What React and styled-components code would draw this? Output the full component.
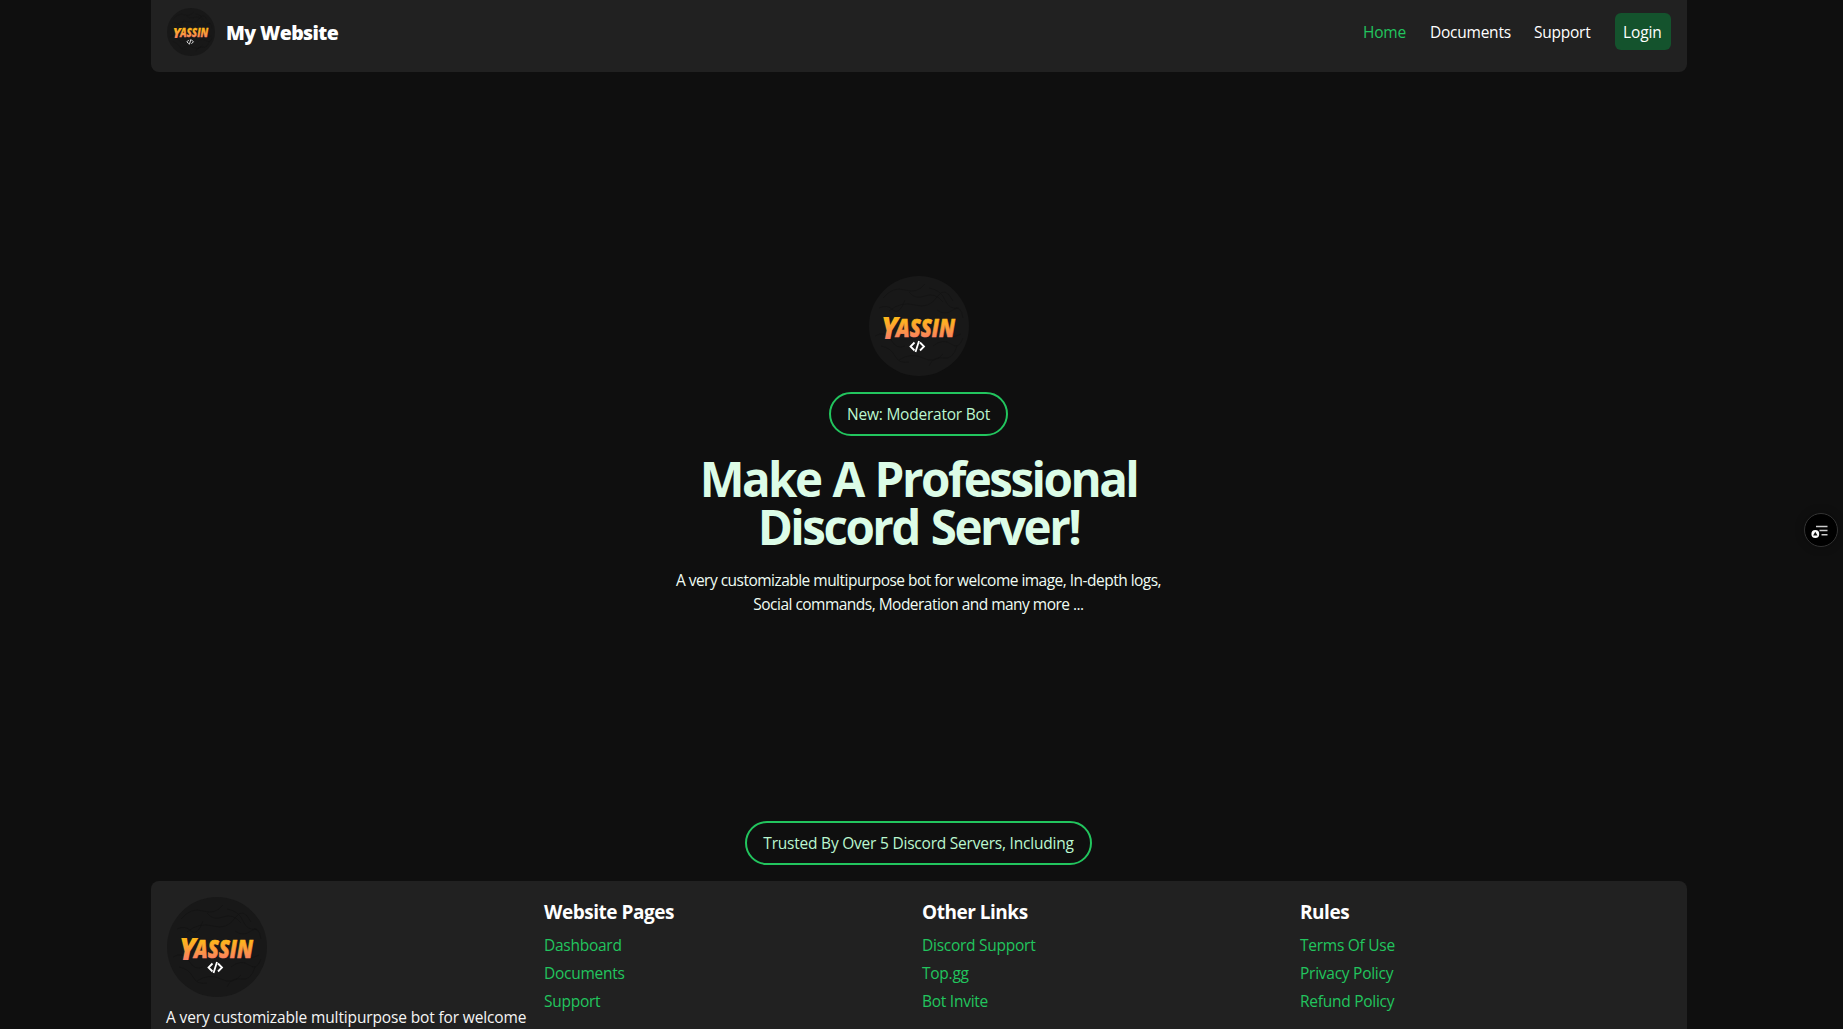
import React from "react";
import styled, { createGlobalStyle } from "styled-components";

const Global = createGlobalStyle`
  *, *::before, *::after { box-sizing: border-box; }
  html, body { margin: 0; height: 100%; }
  body {
    overflow: hidden;
    background: #0f0f0f;
    color: #fff;
    font-family: "Open Sans", "Noto Sans", sans-serif;
    font-size: 16px;
    line-height: 24px;
  }
  h1, h2, p, ul { margin: 0; padding: 0; }
  ul { list-style: none; }
  a { color: inherit; text-decoration: none; white-space: nowrap; }
`;

const Page = styled.div`
  height: 1029px;
  width: 100%;
  padding-right: 5px;
  overflow: hidden;
  display: flex;
  flex-direction: column;
  align-items: center;
`;

const Header = styled.header`
  width: 1536px;
  height: 72px;
  flex: none;
  padding: 8px 16px 16px;
  display: flex;
  justify-content: space-between;
  align-items: flex-start;
  background: #212121;
  border-radius: 0 0 8px 8px;
`;

const Brand = styled.a`
  display: flex;
  align-items: center;
  gap: 11px;
`;

const BrandName = styled.span`
  padding-top: 2px;
  font-size: 19.5px;
  line-height: 28px;
  font-weight: 800;
  letter-spacing: -0.6px;
`;

const Nav = styled.nav`
  display: flex;
  align-items: center;
  gap: 24px;
  padding-top: 5px;
`;

const NavLink = styled.a`
  font-size: 15.5px;
  line-height: 24px;
  width: ${(p) => p.$w}px;
  letter-spacing: -0.24px;
  color: ${(p) => (p.$active ? "#22c55e" : "#fff")};
`;

const LoginButton = styled(NavLink)`
  height: 37px;
  padding: 7px 8px 6px;
  border-radius: 6px;
  background: #14532d;
  letter-spacing: -0.1px;
`;

const Hero = styled.main`
  height: 749px;
  flex: none;
  display: flex;
  flex-direction: column;
  align-items: center;
  justify-content: flex-start;
  padding-top: 204px;
`;

const Pill = styled.div`
  height: 44px;
  flex: none;
  width: ${(p) => p.$w}px;
  margin-top: ${(p) => p.$top || 0}px;
  margin-right: 1px;
  border: 2px solid #22c55e;
  border-radius: 22px;
  display: flex;
  align-items: center;
  justify-content: center;
  color: #bbf7d0;
  font-size: 15.5px;
  white-space: nowrap;
  letter-spacing: -0.22px;
`;

const Title = styled.h1`
  margin-top: 19px;
  padding-right: 1px;
  color: #dcfce7;
  font-size: 47.5px;
  line-height: 48px;
  font-weight: 700;
  text-align: center;
  letter-spacing: -2.5px;
  word-spacing: 2px;
  white-space: nowrap;
`;

const Lead = styled.p`
  margin-top: 17px;
  padding-right: 1px;
  color: #f0fdf4;
  font-size: 15.5px;
  line-height: 24px;
  text-align: center;
  letter-spacing: -0.52px;
  white-space: nowrap;
`;

const Footer = styled.footer`
  width: 1536px;
  height: 220px;
  flex: none;
  margin-top: 16px;
  padding: 16px;
  display: grid;
  grid-template-columns: repeat(4, 1fr);
  column-gap: 8px;
  background: #212121;
  border-radius: 8px;
`;

const FooterColumn = styled.div`
  margin-left: -1px;
`;

const About = styled.p`
  margin: 8px 0 0 -1px;
  color: #f5f5f5;
  font-size: 15.5px;
  line-height: 24px;
  white-space: nowrap;
  letter-spacing: -0.14px;
`;

const ColumnTitle = styled.h2`
  padding-top: 1px;
  font-size: 19px;
  line-height: 28px;
  font-weight: 700;
  letter-spacing: -0.48px;
`;

const LinkList = styled.ul`
  margin-top: 7px;
  display: grid;
  row-gap: 4px;
  color: #22c55e;
  font-size: 15.5px;
  line-height: 24px;
  letter-spacing: -0.26px;
`;

const LogoSvg = styled.svg`
  display: block;
  flex: none;
`;

const LogoText = styled.text`
  font-family: "Open Sans", sans-serif;
  font-size: ${(p) => p.$size}px;
  font-weight: 800;
  font-style: italic;
`;

const Floating = styled.button`
  position: absolute;
  left: 1804px;
  top: 513px;
  width: 34px;
  height: 34px;
  padding: 0;
  border: 1px solid #333;
  border-radius: 50%;
  background: #000;
  box-shadow: 0 0 10px rgba(0, 0, 0, 0.3);
`;

const MenuGlyph = styled.svg`
  display: block;
`;

function Logo({ size, id }) {
  return (
    <LogoSvg width={size} height={size} viewBox="0 0 100 100">
      <defs>
        <linearGradient id={id} gradientUnits="userSpaceOnUse" x1="0" y1="42" x2="0" y2="62">
          <stop offset="0.1" stopColor="#fdb51c" />
          <stop offset="1" stopColor="#fb8062" />
        </linearGradient>
      </defs>
      <circle cx="50" cy="50" r="50" fill="#181818" />
      <g fill="none" stroke="#131313" strokeWidth="0.7">
        <path d="M14 22q10-12 22-8t20-6M20 35q12-10 26-6t22-8 16 4M6 60q10-6 16 4t14 6M64 70q10-8 18-2t12-6M30 84q12-8 24-2t20-4M60 12q12 2 16 12t14 8" />
        <path d="M10 32q8-4 14 2t12-10M40 16q6 8 16 4t18 6M68 34q8 6 16 0t10 8M12 70q10 2 14 10t14 6M60 90q4-10 14-8t14-12M72 60q8 4 20-2" />
      </g>
      <LogoText $size={30} x="12" y="62.5" textLength="17" lengthAdjust="spacingAndGlyphs" fill={`url(#${id})`}>Y</LogoText>
      <LogoText $size={25} x="27" y="60.5" textLength="59" lengthAdjust="spacingAndGlyphs" fill={`url(#${id})`} stroke={`url(#${id})`} strokeWidth="0.6">ASSIN</LogoText>
      <g fill="none" stroke="#fff" strokeWidth="1.8">
        <path d="m45.500 66.500-4 4 4 4M50 65l-3.500 11M51 66.500l4 4-4 4" />
      </g>
    </LogoSvg>
  );
}

const columns = [
  { title: "Website Pages", links: ["Dashboard", "Documents", "Support"] },
  { title: "Other Links", links: ["Discord Support", "Top.gg", "Bot Invite"] },
  { title: "Rules", links: ["Terms Of Use", "Privacy Policy", "Refund Policy"] },
];

export default function App() {
  return (
    <>
      <Global />
      <Page>
        <Header>
          <Brand href="#">
            <Logo size={48} id="logo-nav" />
            <BrandName>My Website</BrandName>
          </Brand>
          <Nav>
            <NavLink href="#" $active $w={43}>Home</NavLink>
            <NavLink href="#" $w={80}>Documents</NavLink>
            <NavLink href="#" $w={57}>Support</NavLink>
            <LoginButton href="#" $w={56}>Login</LoginButton>
          </Nav>
        </Header>
        <Hero>
          <Logo size={100} id="logo-hero" />
          <Pill $w={179} $top={16}>New: Moderator Bot</Pill>
          <Title>Make A Professional<br />Discord Server!</Title>
          <Lead>
            A very customizable multipurpose bot for welcome image, In-depth logs,
            <br />
            Social commands, Moderation and many more ...
          </Lead>
        </Hero>
        <Pill $w={347}>Trusted By Over 5 Discord Servers, Including</Pill>
        <Footer>
          <div>
            <Logo size={100} id="logo-footer" />
            <About>A very customizable multipurpose bot for welcome</About>
          </div>
          {columns.map((c) => (
            <FooterColumn key={c.title}>
              <ColumnTitle>{c.title}</ColumnTitle>
              <LinkList>
                {c.links.map((l) => (
                  <li key={l}><a href="#">{l}</a></li>
                ))}
              </LinkList>
            </FooterColumn>
          ))}
        </Footer>
      </Page>
      <Floating aria-label="Open menu">
        <MenuGlyph width="32" height="32" viewBox="0 0 32 32">
          <path d="M11 12.500h11.500M14.500 16.500h8M16.500 20.800h6" stroke="#ccc" strokeWidth="1.5" />
          <circle cx="10.300" cy="20" r="3.900" fill="#fff" />
          <path d="m10.300 17.800 2.200 3.700h-4.400z" fill="#111" />
        </MenuGlyph>
      </Floating>
    </>
  );
}
